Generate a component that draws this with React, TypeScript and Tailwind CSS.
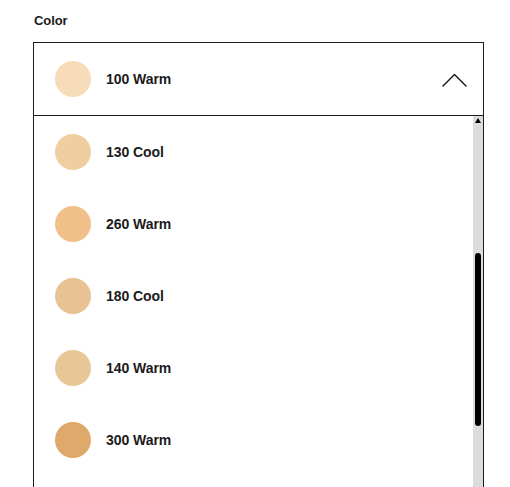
import React from 'react';

interface Shade {
  name: string;
  hex: string;
}

const SHADES: Shade[] = [
  { name: '130 Cool', hex: '#efcfa0' },
  { name: '260 Warm', hex: '#efc189' },
  { name: '180 Cool', hex: '#e8c293' },
  { name: '140 Warm', hex: '#e8c796' },
  { name: '300 Warm', hex: '#dfa96b' },
];

const ChevronUp: React.FC = () => (
  <svg width="25" height="14" viewBox="0 0 25 14" fill="none" stroke="#111" strokeWidth="1.4" strokeLinecap="round" strokeLinejoin="round">
    <path d="M1 13 L12.5 1.5 L24 13" />
  </svg>
);

const Swatch: React.FC<{ hex: string }> = ({ hex }) => (
  <span className="w-9 h-9 rounded-full shrink-0" style={{ backgroundColor: hex }} />
);

export default function App() {
  return (
    <div className="h-[487px] overflow-hidden bg-white px-[33px] pt-[12px] text-[#1b1b1b]" style={{ fontFamily: '"Liberation Sans", Arial, sans-serif' }}>
      <div className="text-[13px] font-bold leading-[18px] tracking-[-0.1px] mb-[12px] pl-px">Color</div>

      <div className="w-[451px] border border-[#1b1b1b]">
        {/* selected */}
        <div className="h-[73px] flex items-center pl-[21px] pr-[16px] border-b border-[#1b1b1b]">
          <Swatch hex="#f6dcb8" />
          <span className="ml-[15px] text-[14px] font-bold tracking-[-0.05px]">100 Warm</span>
          <span className="ml-auto mt-[1px]">
            <ChevronUp />
          </span>
        </div>

        {/* options */}
        <div className="flex h-[400px]">
          <ul className="flex-1">
            {SHADES.map(s => (
              <li key={s.name} className="h-[72px] flex items-center pl-[21px]">
                <Swatch hex={s.hex} />
                <span className="ml-[15px] text-[14px] font-bold tracking-[-0.05px]">{s.name}</span>
              </li>
            ))}
          </ul>
          <div className="w-[10px] bg-[#dcdcdc] flex flex-col items-center">
            <div className="mt-[2px] w-0 h-0 border-l-[3px] border-r-[3px] border-b-[5px] border-l-transparent border-r-transparent border-b-black" />
            <div className="mt-[130px] w-[6px] h-[173px] rounded-full bg-black" />
          </div>
        </div>
      </div>
    </div>
  );
}
